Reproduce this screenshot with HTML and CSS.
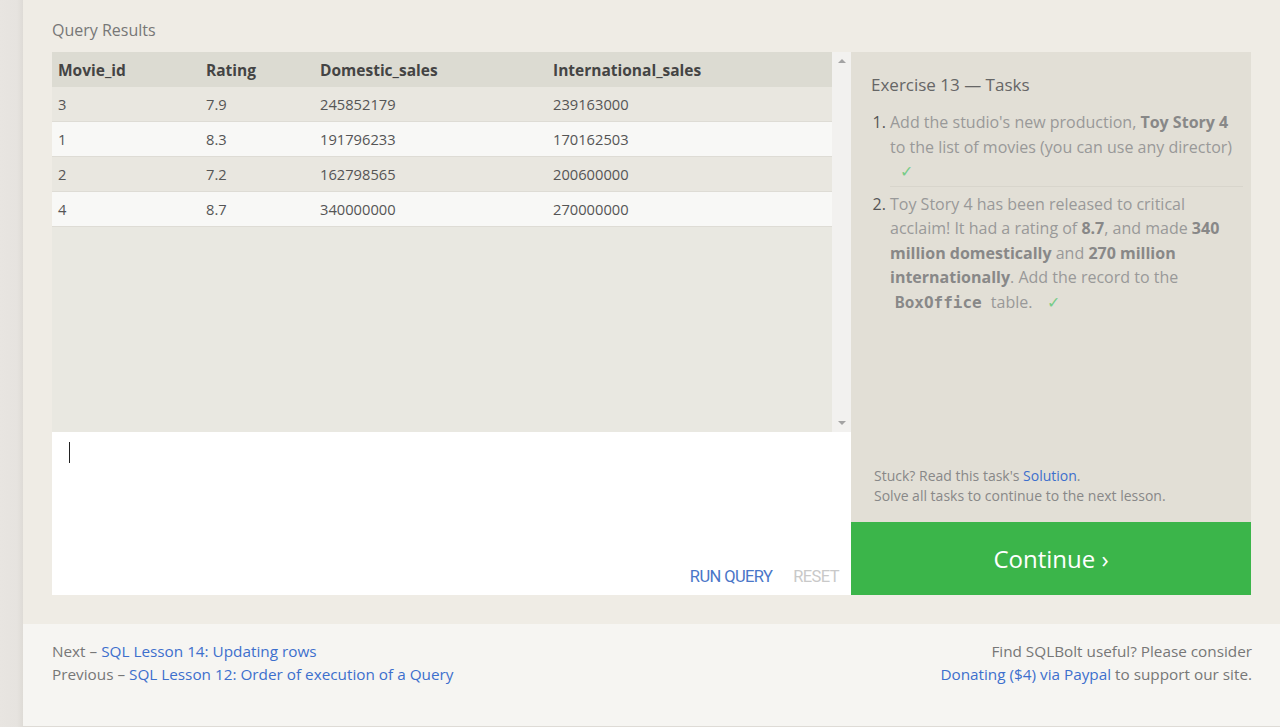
FILE: index.html
```html
<!DOCTYPE html>
<html>
<head>
<meta charset="utf-8">
<link rel="stylesheet" href="styles.css">
</head>
<body>
<div class="page">
  <div class="lesson">
    <div class="results-label">Query Results</div>
    <div class="exercise">
      <div class="left-col">
        <div class="results">
          <div class="table-wrap">
            <table class="results-table">
              <thead>
                <tr><th class="c1">Movie_id</th><th class="c2">Rating</th><th class="c3">Domestic_sales</th><th class="c4">International_sales</th></tr>
              </thead>
              <tbody>
                <tr><td>3</td><td>7.9</td><td>245852179</td><td>239163000</td></tr>
                <tr><td>1</td><td>8.3</td><td>191796233</td><td>170162503</td></tr>
                <tr><td>2</td><td>7.2</td><td>162798565</td><td>200600000</td></tr>
                <tr><td>4</td><td>8.7</td><td>340000000</td><td>270000000</td></tr>
              </tbody>
            </table>
          </div>
          <div class="scrollbar">
            <span class="arrow up"></span>
            <span class="arrow down"></span>
          </div>
        </div>
        <div class="editor">
          <div class="cursor"></div>
          <div class="editor-actions">
            <span class="run">RUN QUERY</span>
            <span class="reset">RESET</span>
          </div>
        </div>
      </div>
      <div class="right-col">
        <div class="tasks">
          <div class="tasks-title">Exercise 13 — Tasks</div>
          <ol class="task-list">
            <li>Add the studio's new production, <b>Toy Story 4</b> to the list of movies (you can use any director) <span class="check">✓</span></li>
            <li>Toy Story 4 has been released to critical acclaim! It had a rating of <b>8.7</b>, and made <b>340 million domestically</b> and <b>270 million internationally</b>. Add the record to the <code>BoxOffice</code> table. <span class="check">✓</span></li>
          </ol>
          <div class="stuck">
            <div>Stuck? Read this task's <a class="link">Solution</a>.</div>
            <div>Solve all tasks to continue to the next lesson.</div>
          </div>
        </div>
        <div class="continue">Continue ›</div>
      </div>
    </div>
  </div>
  <div class="footer">
    <div class="nav">
      <div>Next – <a class="link">SQL Lesson 14: Updating rows</a></div>
      <div>Previous – <a class="link">SQL Lesson 12: Order of execution of a Query</a></div>
    </div>
    <div class="donate">
      <div>Find SQLBolt useful? Please consider</div>
      <div><a class="link">Donating ($4) via Paypal</a> to support our site.</div>
    </div>
  </div>
</div>
</body>
</html>
```

FILE: styles.css
```css
html, body {
  margin: 0;
  padding: 0;
}
body {
  background: linear-gradient(to right, #e8e5e1 0, #e6e3df 17px, #dedbd6 23px);
  font-family: "Open Sans", "Noto Sans", sans-serif;
  color: #777;
  height: 727px;
  overflow: hidden;
}
.page {
  margin-left: 23px;
  background: #efece5;
  height: 726px;
  display: flex;
  flex-direction: column;
}
.lesson {
  padding: 0 29px 29px 29px;
  background: #efece5;
}
.results-label {
  height: 52px;
  box-sizing: border-box;
  padding-top: 19px;
  font-size: 16px;
  line-height: 22px;
  color: #777;
}
.exercise {
  display: flex;
  width: 1199px;
  height: 543px;
}
.left-col {
  width: 799px;
  display: flex;
  flex-direction: column;
}
.results {
  height: 380px;
  display: flex;
  background: #e9e8e1;
}
.table-wrap {
  width: 780px;
}
.results-table {
  border-collapse: collapse;
  width: 100%;
  font-size: 14.7px;
  color: #555;
}
.results-table th {
  background: #dcdbd2;
  text-align: left;
  font-weight: 700;
  font-size: 15.5px;
  color: #444;
  height: 35px;
  padding: 0 6px;
}
.results-table .c1 { width: 136px; }
.results-table .c2 { width: 102px; }
.results-table .c3 { width: 221px; }
.results-table td {
  height: 34px;
  padding: 0 6px;
  border-bottom: 1px solid #dedcd5;
}
.results-table tbody tr:nth-child(odd) td { background: #e9e7e0; }
.results-table tbody tr:nth-child(even) td { background: #f8f8f6; }
.scrollbar {
  width: 19px;
  background: #f2f1ef;
  display: flex;
  flex-direction: column;
  justify-content: space-between;
  align-items: center;
  padding: 6px 0;
  box-sizing: border-box;
}
.arrow {
  width: 0;
  height: 0;
  border-left: 4px solid transparent;
  border-right: 4px solid transparent;
}
.arrow.up { border-bottom: 4px solid #a3a3a3; margin-top: 1px; }
.arrow.down { border-top: 4px solid #a3a3a3; margin-bottom: 1px; }
.editor {
  flex: 1;
  background: #fff;
  display: flex;
  flex-direction: column;
  justify-content: space-between;
  padding: 10px 12px 9px 17px;
}
.cursor {
  width: 1px;
  height: 21px;
  background: #222;
}
.editor-actions {
  display: flex;
  justify-content: flex-end;
  gap: 21px;
  font-family: Roboto, "Noto Sans", sans-serif;
  font-size: 16.5px;
  letter-spacing: -0.6px;
}
.run { color: #4a76c8; }
.reset { color: #c9c9c9; }
.right-col {
  width: 400px;
  display: flex;
  flex-direction: column;
}
.tasks {
  flex: 1;
  background: #e2dfd6;
  padding: 21px 8px 16px 20px;
  display: flex;
  flex-direction: column;
}
.tasks-title {
  font-size: 17px;
  line-height: 24px;
  color: #666;
}
.task-list {
  margin: 13px 0 0 0;
  padding: 0 0 0 19px;
  font-size: 16px;
  line-height: 24.5px;
  color: #999;
  flex: 1;
}
.task-list li:first-child {
  border-bottom: 1px solid #d8d5cc;
  padding-bottom: 2px;
  margin-bottom: 5px;
}
.task-list li::marker {
  color: #555;
}
.task-list b {
  color: #888;
  font-weight: 700;
}
.task-list code {
  font-family: "DejaVu Sans Mono", "Liberation Mono", monospace;
  font-weight: 700;
  color: #888;
  font-size: 16px;
  padding: 0 5px;
}
.check {
  color: #77cc88;
  padding-left: 10px;
}
.stuck {
  font-size: 14px;
  line-height: 20px;
  color: #888;
  padding-left: 3px;
}
.link {
  color: #3d6fcd;
  text-decoration: none;
}
.continue {
  height: 73px;
  background: #3bb54a;
  color: #fff;
  font-size: 24px;
  display: flex;
  align-items: center;
  justify-content: center;
}
.footer {
  flex: 1;
  background: #f6f5f2;
  display: flex;
  justify-content: space-between;
  padding: 16px 28px 0 29px;
  font-size: 15.3px;
  line-height: 23px;
  color: #777;
}
.donate {
  text-align: right;
}
```
